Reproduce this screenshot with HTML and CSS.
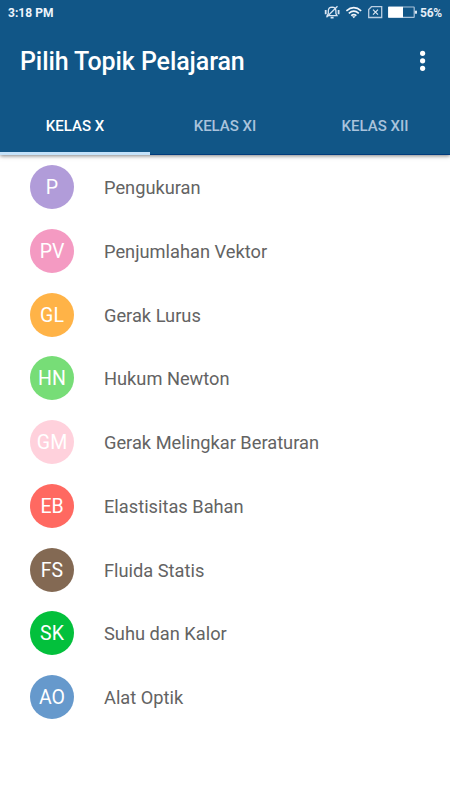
FILE: index.html
```html
<!DOCTYPE html>
<html lang="id">
<head>
<meta charset="utf-8">
<title>Pilih Topik Pelajaran</title>
<link rel="stylesheet" href="styles.css">
</head>
<body>
<header class="header">
  <div class="status">
    <span class="time">3:18 PM</span>
    <svg class="status-icons" width="96" height="16" viewBox="0 0 96 16" fill="none">
      <g stroke="#dbe6f3" stroke-width="1.3">
        <path d="M3.2 11.6h9.8L11.9 9.6V6.8Q11.7 3.3 8.1 3.2 4.5 3.3 4.3 6.8V9.6z"/>
        <path d="M2.5 13.3L13.5 2.3"/>
        <path d="M6.6 13.6h3M1.7 6v4.2M14.6 6v4.2" stroke-width="1.8"/>
      </g>
      <g stroke="#f2f6fb" stroke-width="1.6">
        <path d="M22.4 6.8q7.4-6.2 14.8 0M24.8 9.3q5-4.2 10 0M27.2 11.6q2.6-2 5.2 0"/>
      </g>
      <path d="M28 12.2h3.6l-1.8 2z" fill="#f2f6fb"/>
      <path d="M47.5 2.7H57.7V13.5H44.7V5.5z" stroke="#b9cde1" stroke-width="1.3"/>
      <path d="M49 5.7l5 5M54 5.7l-5 5" stroke="#dce7f2" stroke-width="1.2"/>
      <rect x="64.6" y="3" width="25.6" height="10.4" rx=".5" stroke="#a9c2da" stroke-width="1.2"/>
      <path d="M64.2 2.8H79V13.5H64.2z" fill="#fff"/>
      <path d="M90.8 6.7H93v3h-2.2z" fill="#dce7f2"/>
    </svg>
    <span class="battery">56%</span>
  </div>
  <div class="toolbar">
    <h1 class="title">Pilih Topik Pelajaran</h1>
    <svg class="more" width="6" height="22" viewBox="0 0 6 22" fill="#fff">
      <circle cx="2.6" cy="3.3" r="2.6"/><circle cx="2.6" cy="10.8" r="2.6"/><circle cx="2.6" cy="18.3" r="2.6"/>
    </svg>
  </div>
  <nav class="tabs">
    <div class="tab active">KELAS X</div>
    <div class="tab">KELAS XI</div>
    <div class="tab">KELAS XII</div>
  </nav>
</header>
<main class="list">
  <div class="row"><span class="avatar purple">P</span><span class="label">Pengukuran</span></div>
  <div class="row"><span class="avatar pink">PV</span><span class="label">Penjumlahan Vektor</span></div>
  <div class="row"><span class="avatar orange">GL</span><span class="label">Gerak Lurus</span></div>
  <div class="row"><span class="avatar lime">HN</span><span class="label">Hukum Newton</span></div>
  <div class="row"><span class="avatar rose">GM</span><span class="label">Gerak Melingkar Beraturan</span></div>
  <div class="row"><span class="avatar red">EB</span><span class="label">Elastisitas Bahan</span></div>
  <div class="row"><span class="avatar brown">FS</span><span class="label">Fluida Statis</span></div>
  <div class="row"><span class="avatar green">SK</span><span class="label">Suhu dan Kalor</span></div>
  <div class="row"><span class="avatar blue">AO</span><span class="label">Alat Optik</span></div>
</main>
</body>
</html>
```
FILE: styles.css
```css
* { box-sizing: border-box; }
body { margin: 0; height: 800px; background: #fff; font-family: Roboto, sans-serif; overflow: hidden; }
.header { height: 155px; background: #115687; color: #fff; box-shadow: 0 1px 4px rgba(0,0,0,.5), inset 0 -1px #003b7c; }
.status { height: 25px; display: flex; align-items: center; padding: 0 7px 0 8px; font-size: 12px; font-weight: 700; line-height: 25px; }
.time { flex: 1; color: #eef4fb; padding-top: 2px; letter-spacing: .05px; }
.status-icons { margin: -1px 0 0; }
.battery { width: 23px; white-space: nowrap; color: #e4edf6; padding-top: 2px; letter-spacing: -.2px; }
.toolbar { height: 70px; display: flex; align-items: center; justify-content: space-between; padding: 2px 24px 0 20px; }
.title { margin: 1px 0 0; font-size: 25px; font-weight: 500; line-height: 30px; letter-spacing: -.09px; }
.more { margin-top: -1px; }
.tabs { display: grid; grid-template-columns: repeat(3, 1fr); height: 60px; }
.tab { text-align: center; font-size: 15px; font-weight: 500; line-height: 63px; height: 60px; color: #a9c3dc; }
.tab.active { color: #fff; box-shadow: inset 0 -3px #c4e2fa; }
.list { padding-top: 10px; }
.row { display: flex; align-items: flex-start; height: 63.75px; padding-left: 30px; }
.avatar { width: 44px; height: 44px; border-radius: 50%; color: #fff; font-size: 19.5px; line-height: 46px; text-align: center; }
.label { margin-left: 30px; color: #636363; font-size: 18.25px; line-height: 46px; }
.purple { background: #b19cd9; }
.pink { background: #f49ac2; }
.orange { background: #ffb347; }
.lime { background: #77dd77; }
.rose { background: #ffd1dc; }
.red { background: #ff6961; }
.brown { background: #836953; }
.green { background: #03c03c; }
.blue { background: #6699cc; }
```
